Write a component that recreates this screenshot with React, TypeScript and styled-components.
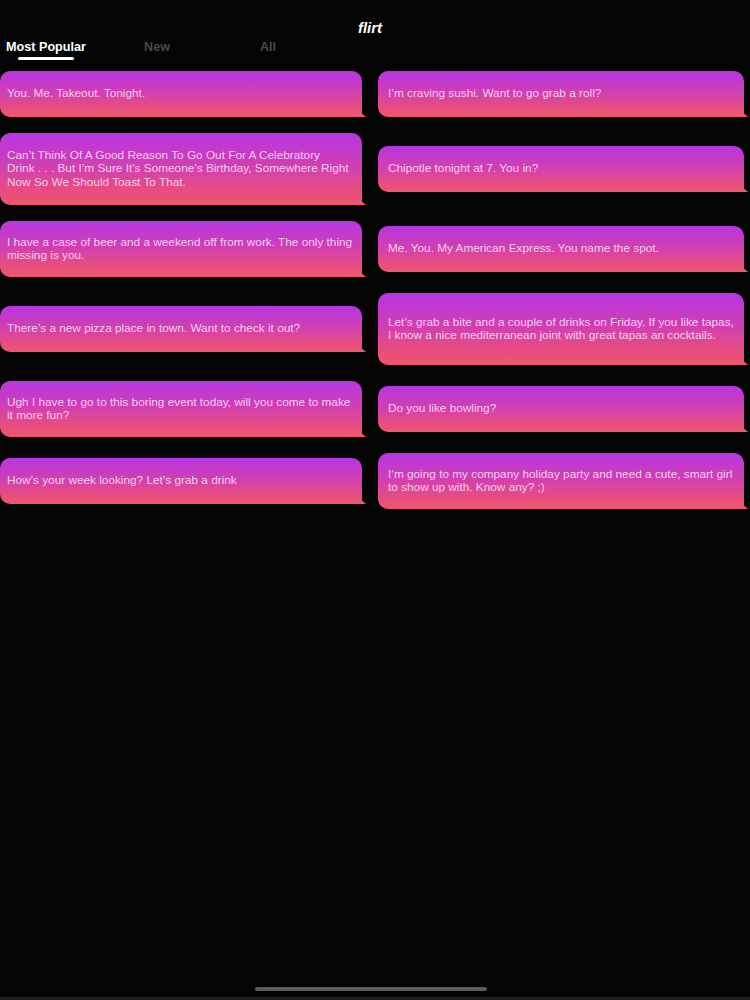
import * as React from 'react'
import styled, { createGlobalStyle } from 'styled-components'

const GlobalStyle = createGlobalStyle`
  html, body {
    margin: 0;
    padding: 0;
    background: #040404;
  }
  body {
    font-family: 'Liberation Sans', Arial, sans-serif;
  }
`

const Screen = styled.div`
  position: relative;
  width: 750px;
  height: 1000px;
  background: #040404;
  overflow: hidden;
  display: flex;
  flex-direction: column;
`

const Title = styled.div`
  height: 20px;
  padding-top: 18px;
  text-align: center;
  color: #fff;
  font-size: 15px;
  font-weight: bold;
  font-style: italic;
  line-height: 20px;
  margin-left: -10px;
`

const Tabs = styled.div`
  display: flex;
  gap: 19px;
  height: 31px;
  padding-top: 2px;
`

const Tab = styled.div<{ $active?: boolean }>`
  position: relative;
  width: 92px;
  text-align: center;
  font-size: 12.6px;
  font-weight: bold;
  line-height: 15px;
  color: ${p => (p.$active ? '#ffffff' : '#4a4a4a')};

  &::after {
    content: '';
    display: ${p => (p.$active ? 'block' : 'none')};
    position: absolute;
    left: 18px;
    top: 17px;
    width: 56px;
    height: 3px;
    border-radius: 2px;
    background: #fff;
  }
`

const Grid = styled.div`
  display: grid;
  grid-template-columns: 362px 366px;
  column-gap: 16px;
  row-gap: 16px;
  align-items: center;
`

const Bubble = styled.div<{ $right?: boolean; $tall?: boolean }>`
  position: relative;
  box-sizing: border-box;
  min-height: ${p => (p.$tall ? '72px' : '46px')};
  padding: 14.5px 7px 14.5px ${p => (p.$right ? '10px' : '7px')};
  display: flex;
  align-items: center;
  white-space: pre-line;
  border-radius: 10px 10px 4px 10px;
  background: linear-gradient(180deg, #b835e2 0%, #cf3fb4 45%, #e84d80 80%, #f0566a 100%);
  color: rgba(255, 230, 248, 0.86);
  font-size: 11.8px;
  line-height: 13.5px;

  &::after {
    content: '';
    position: absolute;
    right: -4px;
    bottom: 0;
    width: 0;
    height: 0;
    border-top: 6px solid transparent;
    border-left: 7px solid #f0566a;
  }
`

const HomeIndicator = styled.div`
  position: absolute;
  left: 255px;
  bottom: 9px;
  width: 232px;
  height: 4px;
  border-radius: 2px;
  background: #5c5c5c;
`

const BottomStrip = styled.div`
  position: absolute;
  left: 0;
  right: 0;
  bottom: 0;
  height: 3px;
  background: #1e1e1e;
`

type Msg = { text: string; tall?: boolean }

const rows: [Msg, Msg][] = [
  [{ text: 'You. Me. Takeout. Tonight.' }, { text: 'I’m craving sushi. Want to go grab a roll?' }],
  [
    {
      text: 'Can’t Think Of A Good Reason To Go Out For A Celebratory\nDrink . . . But I’m Sure It’s Someone’s Birthday, Somewhere Right Now So We Should Toast To That.',
      tall: true,
    },
    { text: 'Chipotle tonight at 7. You in?' },
  ],
  [
    { text: 'I have a case of beer and a weekend off from work. The only thing missing is you.' },
    { text: 'Me. You. My American Express. You name the spot.' },
  ],
  [
    { text: 'There’s a new pizza place in town. Want to check it out?' },
    {
      text: 'Let’s grab a bite and a couple of drinks on Friday. If you like tapas, I know a nice mediterranean joint with great tapas an cocktails.',
      tall: true,
    },
  ],
  [
    { text: 'Ugh I have to go to this boring event today, will you come to make it more fun?' },
    { text: 'Do you like bowling?' },
  ],
  [
    { text: 'How’s your week looking? Let’s grab a drink' },
    { text: 'I’m going to my company holiday party and need a cute, smart girl to show up with. Know any? ;)' },
  ],
]

export default function App() {
  return (
    <>
      <GlobalStyle />
      <Screen>
        <Title>flirt</Title>
        <Tabs>
          <Tab $active>Most Popular</Tab>
          <Tab>New</Tab>
          <Tab>All</Tab>
        </Tabs>
        <Grid>
          {rows.map(([l, r], i) => (
            <React.Fragment key={i}>
              <Bubble $tall={l.tall}>{l.text}</Bubble>
              <Bubble $right $tall={r.tall}>
                {r.text}
              </Bubble>
            </React.Fragment>
          ))}
        </Grid>
        <HomeIndicator />
        <BottomStrip />
      </Screen>
    </>
  )
}
